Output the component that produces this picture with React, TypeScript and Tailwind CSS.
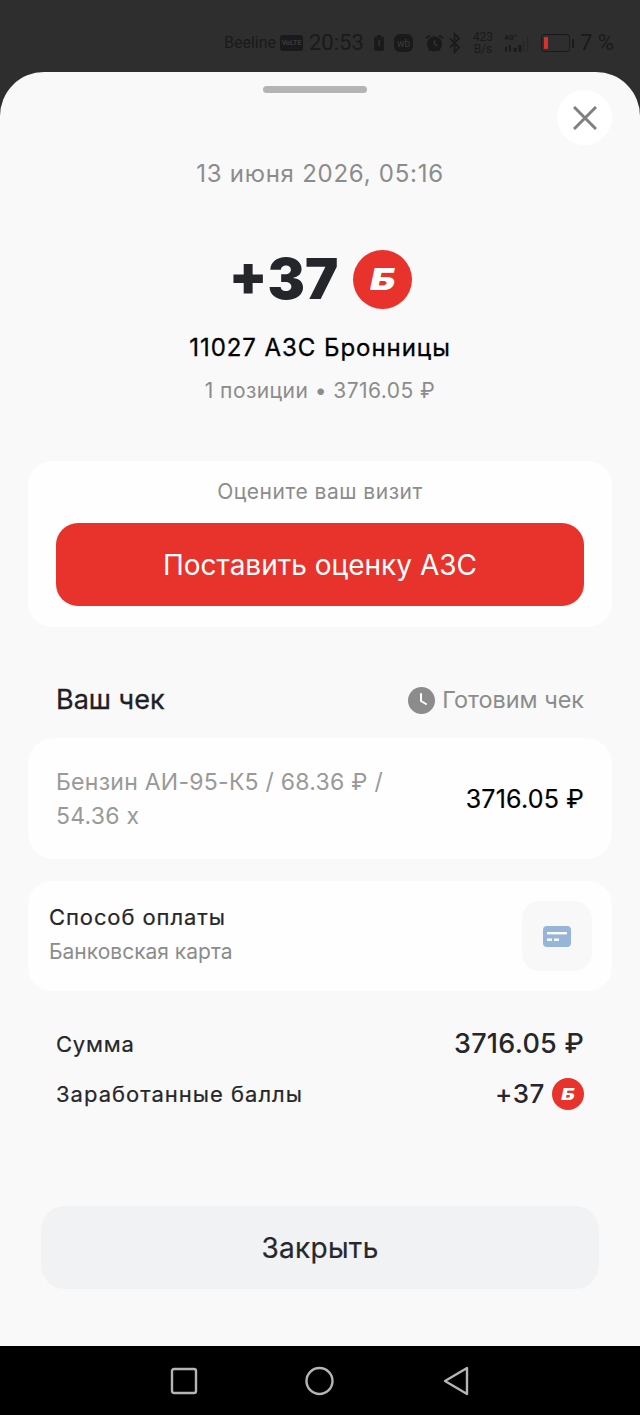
import React from "react";

function Badge({ size, text }: { size: string; text: string }) {
  return (
    <span className={`${size} ${text} inline-flex items-center justify-center rounded-full bg-[#e8322c] font-black italic text-white leading-none`}>
      <span className="inline-block scale-x-[1.3]">Б</span>
    </span>
  );
}

function StatusBar() {
  return (
    <div className="flex h-[72px] shrink-0 items-center justify-end bg-[#2e2e2e] pr-[27px] pt-[14px] font-['Roboto',sans-serif] text-[#1a1a1a]">
      <span className="text-[16px] leading-none">Beeline</span>
      <span className="ml-[4px] flex h-[16px] w-[23px] items-center justify-center rounded-[3px] bg-[#1a1a1a] text-[7px] font-bold text-[#3a3a3a]">VoLTE</span>
      <span className="ml-[6px] w-[55px] text-[22px] leading-none">20:53</span>
      <svg className="ml-[10px]" width="10" height="16" viewBox="0 0 10 16" fill="#1a1a1a"><rect x="3" y="0" width="4" height="2" /><rect x="0" y="1.5" width="10" height="14.5" rx="2" /><rect x="4.4" y="5" width="1.4" height="6" fill="#333" /></svg>
      <span className="ml-[10px] flex h-[18px] w-[19px] items-center justify-center rounded-[6px] bg-[#1a1a1a] text-[10px] text-[#3a3a3a]">wb</span>
      <svg className="ml-[12px]" width="19" height="20" viewBox="0 0 20 20" fill="none" stroke="#1a1a1a"><circle cx="10" cy="11" r="7.5" fill="#1a1a1a" /><path d="M10 7v4l3 2" stroke="#333" strokeWidth="1.5" /><path d="M1 5l4-3M19 5l-4-3M4 18l2-2M16 18l-2-2" strokeWidth="2" /></svg>
      <svg className="ml-[5px]" width="12" height="22" viewBox="0 0 13 22" fill="none" stroke="#1a1a1a" strokeWidth="1.8"><path d="M1 6l10 10-5 5V1l5 5L1 16" /></svg>
      <span className="ml-[11px] flex w-[22px] flex-col items-center text-[12px] leading-[12px]"><span>423</span><span>B/s</span></span>
      <svg className="ml-[10px]" width="29" height="22" viewBox="0 0 30 22" fill="#1a1a1a"><text x="0" y="8" fontSize="8" fontWeight="700" fontFamily="Roboto">4G⁺</text><rect x="1" y="15" width="2" height="5" /><rect x="5" y="13" width="2" height="7" /><rect x="10" y="16" width="3" height="4" /><rect x="15" y="13" width="3" height="7" /><rect x="20" y="9" width="1" height="11" fill="#242424" /><rect x="24" y="4" width="1" height="16" fill="#242424" /></svg>
      <div className="ml-[8px] flex h-[18px] w-[29px] items-center rounded-[3px] border border-[#1a1a1a] pl-[2px]"><div className="h-[12px] w-[4px] rounded-[1px] bg-[#d9302a]" /></div>
      <div className="ml-[2px] h-[9px] w-[2px] bg-[#1a1a1a]" />
      <span className="ml-[6px] w-[33px] whitespace-nowrap text-[22px] leading-none">7 %</span>
    </div>
  );
}

function NavBar() {
  return (
    <div className="flex h-[69px] shrink-0 items-center bg-black pl-[170px]">
      <svg width="310" height="32" viewBox="0 0 310 32" fill="none" stroke="#b5b5b5" strokeWidth="2.4" strokeLinejoin="round">
        <rect x="2" y="4" width="24" height="24" rx="2" />
        <circle cx="149.5" cy="16" r="13" />
        <path d="M297 3v26L275 16z" />
      </svg>
    </div>
  );
}

export default function App() {
  return (
    <div className="flex h-[1415px] w-[640px] flex-col overflow-hidden bg-[#2e2e2e] font-['Inter',sans-serif]">
      <StatusBar />
      <div className="relative flex min-h-0 flex-1 flex-col rounded-t-[44px] bg-[#f9f9f9] px-[28px]">
        <div className="mx-auto mt-[14px] h-[7px] w-[104px] translate-x-[-5px] rounded-full bg-[#b4b4b4]" />
        <button className="absolute right-[28px] top-[18px] flex h-[55px] w-[55px] items-center justify-center rounded-full bg-white">
          <svg width="24" height="24" viewBox="0 0 24 24" stroke="#808080" strokeWidth="3"><path d="M1 1l22 22M23 1L1 23" /></svg>
        </button>

        <p className="mt-[66px] text-center text-[24px] leading-[30px] tracking-[0.75px] text-[#8c8c8c]">13 июня 2026, 05:16</p>

        <div className="mt-[60px] flex items-center justify-center gap-[15px] pl-[1px]">
          <span className="text-[56px] font-black leading-[60px] text-[#24262b]">+37</span>
          <Badge size="h-[59px] w-[59px]" text="text-[30px]" />
        </div>

        <p className="mt-[24px] text-center text-[24px] font-normal leading-[30px] tracking-[0.95px] text-black [-webkit-text-stroke:0.3px_black]">11027 АЗС Бронницы</p>
        <p className="mt-[14px] text-center text-[21px] leading-[28px] tracking-[0.45px] text-[#8c8c8c]">1 позиции • 3716.05 ₽</p>

        <section className="mt-[56px] rounded-[24px] bg-[#fefefe] px-[28px] pb-[21px] pt-[18px]">
          <p className="text-center text-[21px] leading-[26px] tracking-[0.5px] text-[#8c8c8c]">Оцените ваш визит</p>
          <button className="mt-[18px] flex h-[83px] w-full items-center justify-center rounded-[22px] bg-[#e8322c] text-[28px] font-normal text-white">
            Поставить оценку АЗС
          </button>
        </section>

        <div className="mt-[56px] flex items-center justify-between px-[28px]">
          <span className="text-[27px] font-normal leading-[34px] text-[#1f2024] [-webkit-text-stroke:0.3px_#1f2024]">Ваш чек</span>
          <span className="flex items-center gap-[7px] text-[23.4px] leading-[34px] text-[#8c8c8c]">
            <svg width="27" height="27" viewBox="0 0 27 27"><circle cx="13.5" cy="13.5" r="13.5" fill="#8c8c8c" /><path d="M13 7v7l5 3" fill="none" stroke="#fff" strokeWidth="2" strokeLinecap="round" /></svg>
            Готовим чек
          </span>
        </div>

        <section className="mt-[21px] flex h-[121px] items-center justify-between rounded-[26px] bg-[#fefefe] px-[28px]">
          <p className="w-[350px] text-[23px] leading-[34px] tracking-[0.26px] text-[#999999]">Бензин АИ-95-К5 / 68.36 ₽ / 54.36 x</p>
          <span className="text-[25px] font-normal leading-[34px] tracking-[0.2px] text-black [-webkit-text-stroke:0.2px_black]">3716.05 ₽</span>
        </section>

        <section className="mt-[22px] flex h-[110px] items-center justify-between rounded-[24px] bg-[#fefefe] pl-[21px] pr-[20px]">
          <div className="pb-[3px]">
            <p className="text-[22px] font-normal leading-[30px] tracking-[0.9px] text-[#26272b] [-webkit-text-stroke:0.2px_#26272b]">Способ оплаты</p>
            <p className="mt-[5px] text-[21px] leading-[30px] text-[#8c8c8c]">Банковская карта</p>
          </div>
          <div className="flex h-[70px] w-[70px] items-center justify-center rounded-[18px] bg-[#f8f8f8]">
            <svg width="28" height="21" viewBox="0 0 28 21"><rect width="28" height="21" rx="4" fill="#97b4d9" /><rect x="4" y="6" width="20" height="2.4" fill="#fff" /><rect x="4" y="12.5" width="5" height="2.4" fill="#fff" /><rect x="11" y="12.5" width="5" height="2.4" fill="#fff" /></svg>
          </div>
        </section>

        <div className="mt-[34px] flex items-center justify-between px-[28px]">
          <span className="text-[22px] font-normal leading-[38px] tracking-[0.8px] text-[#26272b] [-webkit-text-stroke:0.2px_#26272b]">Сумма</span>
          <span className="text-[27px] font-medium leading-[38px] tracking-[0.25px] text-[#26272b]">3716.05 ₽</span>
        </div>
        <div className="mt-[12px] flex items-center justify-between px-[28px]">
          <span className="text-[22px] font-normal leading-[38px] tracking-[1px] text-[#26272b] [-webkit-text-stroke:0.2px_#26272b]">Заработанные баллы</span>
          <span className="flex items-center gap-[7px] text-[26px] font-medium leading-[38px] tracking-[0.6px] text-[#26272b]">
            +37
            <Badge size="h-[32px] w-[32px]" text="text-[16px]" />
          </span>
        </div>

        <button className="mx-[13px] mt-[93px] flex h-[83px] items-center justify-center rounded-[24px] bg-[#f1f2f4] text-[28px] font-normal tracking-[0.3px] text-[#26272b] [-webkit-text-stroke:0.2px_#26272b]">
          Закрыть
        </button>
      </div>
      <NavBar />
    </div>
  );
}
